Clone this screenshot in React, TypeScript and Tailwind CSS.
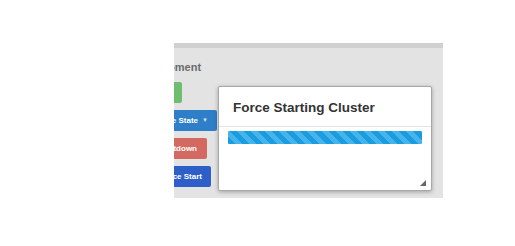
import * as React from "react";

const font = { fontFamily: '"Liberation Sans", Arial, sans-serif' };

function LeftButtons() {
  return (
    <div className="flex flex-col items-start ml-[-60px]">
      <div className="h-[15px] mt-[12px] text-[11px] leading-[15px] font-bold text-[#6b6b6b] ml-[18px]">
        Development
      </div>
      <div className="mt-[7px] h-[21px] w-[68px] bg-[#6fbe6f] rounded-[2px]" />
      <div className="mt-[7px] h-[21px] w-[103px] bg-[#2f7fc8] rounded-[2px] flex items-center justify-end pr-[9px] text-white text-[8px] font-bold">
        Change State
        <span className="ml-[4px] text-[6px] text-[#cfe1f3]">▼</span>
      </div>
      <div className="mt-[7px] h-[21px] w-[93px] bg-[#d36a62] rounded-[2px] flex items-center justify-end pr-[10px] text-white text-[8px] font-bold">
        Shutdown
      </div>
      <div className="mt-[7px] h-[21px] w-[97px] bg-[#2e5fc9] rounded-[2px] flex items-center justify-end pr-[9px] text-white text-[8px] font-bold">
        Force Start
      </div>
    </div>
  );
}

function Modal() {
  return (
    <div className="absolute left-[44px] top-[38px] w-[214px] h-[105px] bg-white border border-[#a8a8a8] rounded-[2px] shadow-[0_1px_4px_rgba(0,0,0,0.3)] flex flex-col">
      <div className="h-[40px] pl-[14px] pt-[12px] text-[13.5px] leading-[17px] font-bold text-[#333] border-b border-[#e2e2e2]">
        Force Starting Cluster
      </div>
      <div className="px-[9px] pt-[4px]">
        <div className="h-[13px] rounded-[1px] bg-[repeating-linear-gradient(45deg,#1a9de0_0px,#1a9de0_5px,#46b3ea_5px,#46b3ea_10px)]" />
      </div>
      <svg
        className="absolute right-[5px] bottom-[4px]"
        width="6"
        height="6"
        viewBox="0 0 6 6"
      >
        <polygon points="6,0 6,6 0,6" fill="#666" />
      </svg>
    </div>
  );
}

export default function App() {
  return (
    <div className="w-[515px] h-[246px] bg-white relative" style={font}>
      <div className="pt-[43px] pl-[174px]">
        <div className="relative w-[269px] h-[155px] bg-[#e3e3e3] border-t-[5px] border-[#d0d0d0] overflow-hidden">
          <LeftButtons />
          <Modal />
        </div>
      </div>
    </div>
  );
}
